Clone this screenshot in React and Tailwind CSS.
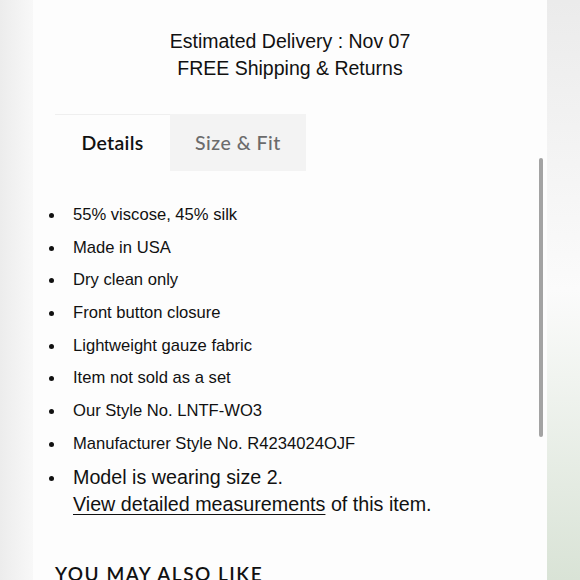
export default function App() {
    const items = [
        "55% viscose, 45% silk",
        "Made in USA",
        "Dry clean only",
        "Front button closure",
        "Lightweight gauze fabric",
        "Item not sold as a set",
        "Our Style No. LNTF-WO3",
        "Manufacturer Style No. R4234024OJF",
    ];

    return (
        <div className="flex w-[580px] h-[580px] overflow-hidden bg-white">
            <div className="w-[33px] shrink-0 bg-linear-to-r from-[#ececec] to-[#f8f8f8]" />

            <div className="relative w-[514px] shrink-0 bg-[#fdfdfd] text-[#111]" style={{ fontFamily: '"Liberation Sans", Arial, sans-serif' }}>
                <div className="pt-[28px] text-center text-[19.5px] leading-[27px]">
                    <p>Estimated Delivery : Nov 07</p>
                    <p>FREE Shipping &amp; Returns</p>
                </div>

                <div className="mt-[32px] ml-[22px] flex h-[57px]" style={{ fontFamily: 'Lato, "Open Sans", sans-serif' }}>
                    <div className="w-[115px] flex items-center justify-center border-t border-[#efefef] text-[19.5px] font-semibold tracking-[0.3px] text-[#111]">
                        Details
                    </div>
                    <div className="w-[136px] flex items-center justify-center bg-[#f3f3f3] text-[19.5px] font-medium tracking-[0.5px] text-[#6b6b6b]">
                        Size &amp; Fit
                    </div>
                </div>

                <ul className="mt-[28px] pl-[16px]">
                    {items.map((t) => (
                        <li key={t} className="flex items-center h-[32.7px] text-[16.6px]">
                            <span className="w-[5px] h-[5px] rounded-full bg-[#111] shrink-0" />
                            <span className="ml-[19px]">{t}</span>
                        </li>
                    ))}
                    <li className="flex mt-[3px] text-[19.7px] leading-[27px]">
                        <span className="w-[5px] h-[5px] mt-[12px] rounded-full bg-[#111] shrink-0" />
                        <span className="ml-[19px]">
                            Model is wearing size 2.
                            <br />
                            <span className="underline underline-offset-[3px] decoration-1">View detailed measurements</span> of this item.
                        </span>
                    </li>
                </ul>

                <h2 className="mt-[44px] ml-[22px] text-[19px] leading-[24px] font-semibold tracking-[1.5px] text-[#111]" style={{ fontFamily: 'Lato, "Open Sans", sans-serif' }}>
                    YOU MAY ALSO LIKE
                </h2>

                <div className="absolute left-[506px] top-[158px] w-[4px] h-[279px] rounded-full bg-[#a3a3a3]" />
            </div>

            <div className="w-[33px] shrink-0 bg-linear-to-b from-[#ebebeb] via-[#fbfbfb] to-[#d9e3d6]" />
        </div>
    );
}
